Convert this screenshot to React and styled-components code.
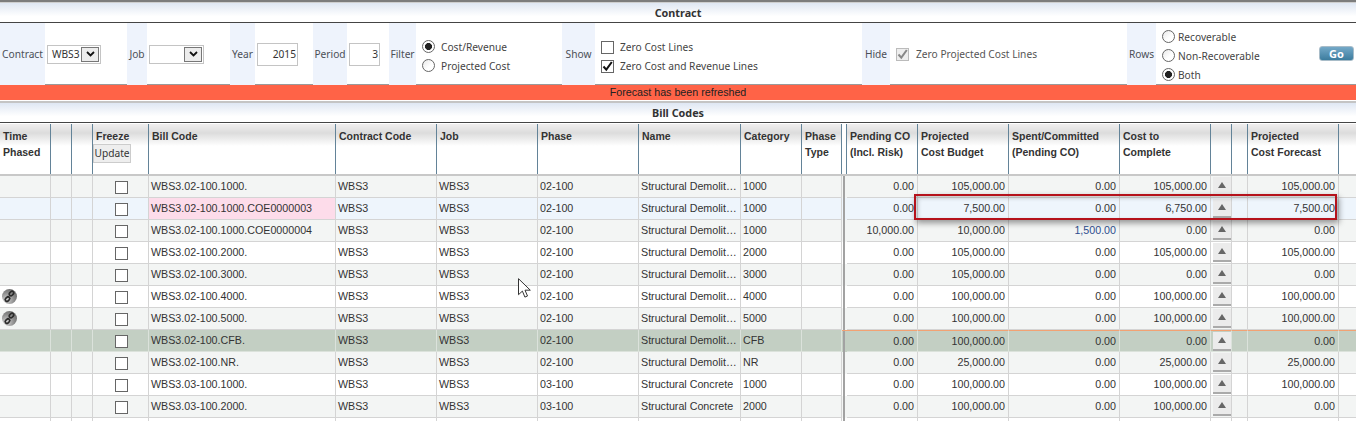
import React from 'react';
import styled, { createGlobalStyle } from 'styled-components';

const GlobalStyle = createGlobalStyle`
  html, body {margin: 0; padding: 0; height: 421px; overflow: hidden; background: #fff;}
  * {box-sizing: border-box;}
`;

const COLUMNS = '51px 21px 21px 56px 187px 101px 101px 101px 102px 61px 40px 5px 71px 91px 111px 91px 21px 16px 91px 18px';
const FORM_COLUMNS = '45px 82px 20px 83px 25px 58px 34px 42px 27px 146px 33px 267px 28px 237px 29px 200px';
const LABEL_FONT = '"Noto Sans", Tahoma, sans-serif';
const TABLE_FONT = '"Liberation Sans", Arial, sans-serif';

const Page = styled.div`
  position: relative;
  width: 1356px;
  height: 421px;
  overflow: hidden;
  padding-top: 3px;
  background: linear-gradient(#7d7d7d 2px, #cfcfcf 2px, #cfcfcf 3px, #fff 3px);
`;
const SectionTitle = styled.div`
  height: 20px;
  border-bottom: 1px solid #444;
  background: linear-gradient(#dfe7f3, #fff 70%);
  color: #333;
  font: bold 10.8px/19px ${LABEL_FONT};
  text-align: center;
`;
const FilterForm = styled.div`
  display: grid;
  grid-template-columns: ${FORM_COLUMNS};
  height: 62px;
  border-bottom: 1px solid #9a9a9a;
  color: #444;
  font: 10.2px/19px ${LABEL_FONT};
`;
const FieldLabel = styled.div`
  display: flex;
  align-items: center;
  justify-content: center;
  background: #eef3fc;
  color: #4b4f57;
  white-space: nowrap;
`;
const FieldValue = styled.div`
  display: flex;
  align-items: ${p => p.$top !== undefined ? 'flex-start' : 'center'};
  justify-content: ${p => p.$spread ? 'space-between' : 'flex-start'};
  padding: ${p => p.$top || 0}px ${p => p.$right || 0}px 0 ${p => p.$left || 0}px;
`;
const SelectBox = styled.div`
  display: flex;
  align-items: center;
  justify-content: space-between;
  width: ${p => p.$width}px;
  height: 19px;
  padding: 0 1px 0 4px;
  border: 1px solid #c4c4c4;
  color: #333;
`;
const SelectArrow = styled.span`
  display: flex;
  align-items: center;
  justify-content: center;
  width: 18px;
  height: 15px;
  border: 1px solid #777;
  background: #ececec;
`;
const NumberBox = styled.div`
  width: ${p => p.$width}px;
  height: 23px;
  padding-right: 1px;
  border: 1px solid #c4c4c4;
  color: #333;
  line-height: 21px;
  text-align: right;
`;
const OptionStack = styled.div`
  display: flex;
  flex-direction: column;
`;
const Option = styled.div`
  display: flex;
  align-items: center;
  gap: ${p => p.$gap || 6}px;
  height: 19px;
  color: ${p => p.$muted ? '#555' : '#444'};
  white-space: nowrap;
`;
const RadioMark = styled.span`
  flex: none;
  width: 13px;
  height: 13px;
  margin-top: -3px;
  border: 1px solid #666;
  border-radius: 50%;
  background: ${p => p.$on ? 'radial-gradient(circle, #222 3.2px, #fff 3.8px)' : 'linear-gradient(135deg, #e8e8e8, #fff 60%)'};
`;
const CheckMark = styled.span`
  flex: none;
  display: flex;
  align-items: center;
  justify-content: center;
  width: 13px;
  height: 13px;
  border: 1px solid ${p => p.$muted ? '#bbb' : '#666'};
  background: ${p => p.$muted ? '#eee' : '#fff'};
`;
const GoButton = styled.button`
  width: 35px;
  height: 15px;
  margin-top: 18px;
  padding: 0;
  border: 1px solid #a8bcc8;
  border-radius: 3px;
  background: linear-gradient(#74a9c8, #3c7c9e);
  color: #fff;
  font: bold 11px/13px ${LABEL_FONT};
`;
const Notice = styled.div`
  height: 16px;
  border-bottom: 1px solid #fff;
  background: #ff6347;
  color: #222;
  font: 10.7px/15px ${TABLE_FONT};
  text-align: center;
`;
const NoticeEdge = styled.div`
  height: 2px;
  background: #c4c4c4;
`;
const Table = styled.div`
  position: relative;
  margin-top: 1px;
  font: 10.7px/16px ${TABLE_FONT};
  color: #333;
`;
const HeaderRow = styled.div`
  display: grid;
  grid-template-columns: ${COLUMNS};
  height: 52px;
  border-bottom: 2px solid #c8c8c8;
  background: linear-gradient(#f0eeee, #dcdcdc 9px, #fff 22px);
`;
const HeaderCell = styled.div`
  padding: 4px 0 0 3px;
  border-right: 1px solid #638398;
  font-size: 10.5px;
  font-weight: bold;
  white-space: nowrap;
`;
const UpdateButton = styled.button`
  display: block;
  width: 38px;
  height: 19px;
  margin: 0 0 0 -3px;
  padding: 0;
  border: 1px solid #ccc;
  background: #eee;
  color: #333;
  font: 10.2px/17px ${LABEL_FONT};
`;
const BodyRow = styled.div`
  display: grid;
  grid-template-columns: ${COLUMNS};
  height: 22px;
  background: ${p => ({ odd: '#f3f5f4', even: '#fff', selected: '#eef5fc', total: '#c3cfc3' })[p.$tone]};
`;
const Cell = styled.div`
  overflow: hidden;
  padding: 2px ${p => p.$number ? 3 : 1}px 0 2px;
  border-right: 1px solid ${p => p.$tone === 'total' ? '#dbe2db' : '#d4d4d4'};
  border-bottom: 1px solid ${p => p.$tone === 'total' ? '#dbe2db' : '#d4d4d4'};
  border-top: ${p => p.$flagged ? '1px solid #f2a273' : '0'};
  background: ${p => p.$pink ? '#fddcea' : 'transparent'};
  color: ${p => p.$link ? '#2f4f8f' : 'inherit'};
  text-align: ${p => p.$number ? 'right' : 'left'};
  white-space: nowrap;
`;
const Splitter = styled.div`
  border-top: ${p => p.$flagged ? '1px solid #f2a273' : '0'};
  background: linear-gradient(90deg, transparent 1px, #a2a2a2 1px, #a2a2a2 3px, transparent 3px);
`;
const HeaderSplitter = styled.div`
  border-right: 1px solid #638398;
  background: #fff;
`;
const IconCell = styled(Cell)`
  padding: 3px 0 0 2px;
  line-height: 0;
`;
const BoxCell = styled(Cell)`
  display: flex;
  justify-content: center;
  padding: 5px 0 0 2px;
`;
const BoxMark = styled.span`
  width: 13px;
  height: 13px;
  border: 1px solid #666;
  background: #fff;
`;
const ArrowCell = styled(Cell)`
  padding: 1px 0 0 2px;
`;
const ArrowButton = styled.span`
  display: flex;
  align-items: flex-start;
  justify-content: center;
  width: 18px;
  height: 19px;
  padding-top: 5px;
  border-bottom: 2px solid #aaa;
  background: #ebebeb;
`;
const ArrowUp = styled.i`
  width: 0;
  height: 0;
  border-left: 4px solid transparent;
  border-right: 4px solid transparent;
  border-bottom: 6px solid #666;
`;
const Highlight = styled.div`
  position: absolute;
  left: 914px;
  top: 70px;
  width: 423px;
  height: 26px;
  border: 2px solid #b5121b;
  box-shadow: 2px 3px 6px rgba(0, 0, 0, .4), inset 2px 2px 4px rgba(0, 0, 0, .2);
  pointer-events: none;
`;
const Pointer = styled.svg`
  position: absolute;
  left: 518px;
  top: 278px;
`;

const Chevron = () => (
  <svg width="9" height="6" viewBox="0 0 9 6">
    <path d="M1 1l3.5 3.5L8 1" fill="none" stroke="#111" strokeWidth="1.8" />
  </svg>
);

const Tick = ({ color }) => (
  <svg width="11" height="11" viewBox="0 0 11 11">
    <path d="M1.5 5.5l2.8 3.2L9.8 1" fill="none" stroke={color} strokeWidth="2" />
  </svg>
);

const ChainIcon = () => (
  <svg width="15" height="15" viewBox="0 0 15 15">
    <defs>
      <radialGradient id="chain-ball" cx="30%" cy="75%" r="85%">
        <stop offset="0" stopColor="#d6d6d6" />
        <stop offset=".6" stopColor="#8c8c8c" />
        <stop offset="1" stopColor="#6a6a6a" />
      </radialGradient>
    </defs>
    <circle cx="7.5" cy="7.5" r="7.5" fill="url(#chain-ball)" />
    <g fill="none" stroke="#2b2b2b" strokeWidth="1.7">
      <rect x="7" y="2.8" width="5" height="3.4" rx="1.7" transform="rotate(-45 9.5 4.5)" />
      <rect x="3" y="8.4" width="5" height="3.4" rx="1.7" transform="rotate(-45 5.5 10.1)" />
    </g>
  </svg>
);

const DEMOLITION = 'Structural Demolit…';
const CONCRETE = 'Structural Concrete';

const ROWS = [
  { tone: 'odd', code: 'WBS3.02-100.1000.', phase: '02-100', name: DEMOLITION, cat: '1000', nums: ['0.00', '105,000.00', '0.00', '105,000.00', '105,000.00'] },
  { tone: 'selected', code: 'WBS3.02-100.1000.COE0000003', pink: true, phase: '02-100', name: DEMOLITION, cat: '1000', nums: ['0.00', '7,500.00', '0.00', '6,750.00', '7,500.00'] },
  { tone: 'odd', code: 'WBS3.02-100.1000.COE0000004', phase: '02-100', name: DEMOLITION, cat: '1000', nums: ['10,000.00', '10,000.00', '1,500.00', '0.00', '0.00'], link: true },
  { tone: 'even', code: 'WBS3.02-100.2000.', phase: '02-100', name: DEMOLITION, cat: '2000', nums: ['0.00', '105,000.00', '0.00', '105,000.00', '105,000.00'] },
  { tone: 'odd', code: 'WBS3.02-100.3000.', phase: '02-100', name: DEMOLITION, cat: '3000', nums: ['0.00', '105,000.00', '0.00', '0.00', '0.00'] },
  { tone: 'even', chain: true, code: 'WBS3.02-100.4000.', phase: '02-100', name: DEMOLITION, cat: '4000', nums: ['0.00', '100,000.00', '0.00', '100,000.00', '100,000.00'] },
  { tone: 'odd', chain: true, code: 'WBS3.02-100.5000.', phase: '02-100', name: DEMOLITION, cat: '5000', nums: ['0.00', '100,000.00', '0.00', '100,000.00', '100,000.00'] },
  { tone: 'total', flagged: true, code: 'WBS3.02-100.CFB.', phase: '02-100', name: DEMOLITION, cat: 'CFB', nums: ['0.00', '100,000.00', '0.00', '0.00', '0.00'] },
  { tone: 'odd', code: 'WBS3.02-100.NR.', phase: '02-100', name: DEMOLITION, cat: 'NR', nums: ['0.00', '25,000.00', '0.00', '25,000.00', '25,000.00'] },
  { tone: 'even', code: 'WBS3.03-100.1000.', phase: '03-100', name: CONCRETE, cat: '1000', nums: ['0.00', '100,000.00', '0.00', '100,000.00', '100,000.00'] },
  { tone: 'odd', code: 'WBS3.03-100.2000.', phase: '03-100', name: CONCRETE, cat: '2000', nums: ['0.00', '100,000.00', '0.00', '100,000.00', '0.00'] },
];

function Row({ row }) {
  const t = row.tone;
  const f = row.flagged;
  return (
    <BodyRow $tone={t}>
      <IconCell $tone={t}>{row.chain && <ChainIcon />}</IconCell>
      <Cell $tone={t} />
      <Cell $tone={t} />
      <BoxCell $tone={t}><BoxMark /></BoxCell>
      <Cell $tone={t} $pink={row.pink}>{row.code}</Cell>
      <Cell $tone={t}>WBS3</Cell>
      <Cell $tone={t}>WBS3</Cell>
      <Cell $tone={t}>{row.phase}</Cell>
      <Cell $tone={t}>{row.name}</Cell>
      <Cell $tone={t}>{row.cat}</Cell>
      <Cell $tone={t} />
      <Splitter $flagged={f} />
      <Cell $tone={t} $flagged={f} $number>{row.nums[0]}</Cell>
      <Cell $tone={t} $flagged={f} $number>{row.nums[1]}</Cell>
      <Cell $tone={t} $flagged={f} $number $link={row.link}>{row.nums[2]}</Cell>
      <Cell $tone={t} $flagged={f} $number>{row.nums[3]}</Cell>
      <ArrowCell $tone={t} $flagged={f}><ArrowButton><ArrowUp /></ArrowButton></ArrowCell>
      <Cell $tone={t} $flagged={f} />
      <Cell $tone={t} $flagged={f} $number>{row.nums[4]}</Cell>
      <Cell $tone={t} $flagged={f} />
    </BodyRow>
  );
}

// last row only peeks in at the bottom edge of the window
const EmptyRow = () => (
  <BodyRow $tone="even">
    {COLUMNS.split(' ').map((w, i) => (i === 11 ? <Splitter key={i} /> : <Cell key={i} $tone="even" />))}
  </BodyRow>
);

export default function App() {
  return (
    <Page>
      <GlobalStyle />
      <SectionTitle>Contract</SectionTitle>
      <FilterForm>
        <FieldLabel>Contract</FieldLabel>
        <FieldValue $left={2}>
          <SelectBox $width={54}>WBS3<SelectArrow><Chevron /></SelectArrow></SelectBox>
        </FieldValue>
        <FieldLabel>Job</FieldLabel>
        <FieldValue $left={2}>
          <SelectBox $width={55}><span /><SelectArrow><Chevron /></SelectArrow></SelectBox>
        </FieldValue>
        <FieldLabel>Year</FieldLabel>
        <FieldValue $left={2}><NumberBox $width={41}>2015</NumberBox></FieldValue>
        <FieldLabel>Period</FieldLabel>
        <FieldValue $left={2}><NumberBox $width={31}>3</NumberBox></FieldValue>
        <FieldLabel>Filter</FieldLabel>
        <FieldValue $left={6} $top={15}>
          <OptionStack>
            <Option><RadioMark $on />Cost/Revenue</Option>
            <Option><RadioMark />Projected Cost</Option>
          </OptionStack>
        </FieldValue>
        <FieldLabel>Show</FieldLabel>
        <FieldValue $left={6} $top={15}>
          <OptionStack>
            <Option><CheckMark />Zero Cost Lines</Option>
            <Option><CheckMark><Tick color="#111" /></CheckMark>Zero Cost and Revenue Lines</Option>
          </OptionStack>
        </FieldValue>
        <FieldLabel>Hide</FieldLabel>
        <FieldValue $left={6}>
          <Option $muted $gap={7}><CheckMark $muted><Tick color="#888" /></CheckMark>Zero Projected Cost Lines</Option>
        </FieldValue>
        <FieldLabel>Rows</FieldLabel>
        <FieldValue $left={6} $right={2} $top={5} $spread>
          <OptionStack>
            <Option $gap={3}><RadioMark />Recoverable</Option>
            <Option $gap={3}><RadioMark />Non-Recoverable</Option>
            <Option $gap={3}><RadioMark $on />Both</Option>
          </OptionStack>
          <GoButton>Go</GoButton>
        </FieldValue>
      </FilterForm>
      <Notice>Forecast has been refreshed</Notice>
      <NoticeEdge />
      <SectionTitle>Bill Codes</SectionTitle>
      <Table>
        <HeaderRow>
          <HeaderCell>Time<br />Phased</HeaderCell>
          <HeaderCell />
          <HeaderCell />
          <HeaderCell>Freeze<UpdateButton>Update</UpdateButton></HeaderCell>
          <HeaderCell>Bill Code</HeaderCell>
          <HeaderCell>Contract Code</HeaderCell>
          <HeaderCell>Job</HeaderCell>
          <HeaderCell>Phase</HeaderCell>
          <HeaderCell>Name</HeaderCell>
          <HeaderCell>Category</HeaderCell>
          <HeaderCell>Phase<br />Type</HeaderCell>
          <HeaderSplitter />
          <HeaderCell>Pending CO<br />(Incl. Risk)</HeaderCell>
          <HeaderCell>Projected<br />Cost Budget</HeaderCell>
          <HeaderCell>Spent/Committed<br />(Pending CO)</HeaderCell>
          <HeaderCell>Cost to<br />Complete</HeaderCell>
          <HeaderCell />
          <HeaderCell />
          <HeaderCell>Projected<br />Cost Forecast</HeaderCell>
          <HeaderCell />
        </HeaderRow>
        {ROWS.map(row => <Row key={row.code} row={row} />)}
        <EmptyRow />
        <Highlight />
      </Table>
      <Pointer width="13" height="20" viewBox="0 0 13 20">
        <path d="M.5.7v16l3.9-3.6 2.5 6 2.6-1.1-2.5-5.8h5.3z" fill="#fff" stroke="#333" strokeWidth="1" />
      </Pointer>
    </Page>
  );
}
